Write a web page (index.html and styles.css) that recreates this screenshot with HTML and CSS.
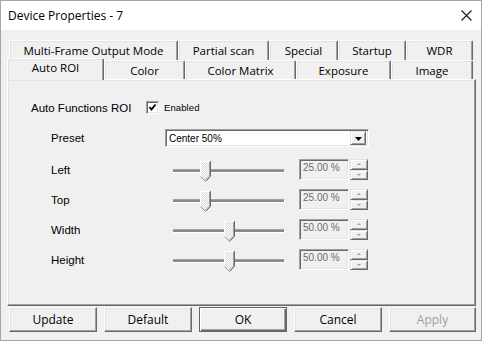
FILE: index.html
```html
<!DOCTYPE html>
<html>
<head>
<meta charset="utf-8">
<link rel="stylesheet" href="styles.css">
</head>
<body>
<div class="window">
  <div class="titlebar">
    <span class="title">Device Properties - 7</span>
    <svg class="close" width="11" height="11" viewBox="0 0 11 11"><path d="M0.5 0.5 L10.5 10.5 M10.5 0.5 L0.5 10.5" stroke="#1a1a1a" stroke-width="1.1" fill="none"/></svg>
  </div>
  <div class="tabs">
    <div class="tabrow back">
      <div class="tab">Multi-Frame Output Mode</div>
      <div class="tab">Partial scan</div>
      <div class="tab">Special</div>
      <div class="tab">Startup</div>
      <div class="tab">WDR</div>
    </div>
    <div class="tabrow front">
      <div class="tab sel">Auto ROI</div>
      <div class="tab">Color</div>
      <div class="tab">Color Matrix</div>
      <div class="tab">Exposure</div>
      <div class="tab">Image</div>
    </div>
  </div>
  <div class="panel">
    <div class="row-main">
      <span class="lbl-main">Auto Functions ROI</span>
      <span class="check"><svg width="9" height="9" viewBox="0 0 9 9"><path d="M1.5 4 L3.5 6.5 L7.5 1.5" stroke="#000" stroke-width="1.8" fill="none"/></svg></span>
      <span class="check-lbl">Enabled</span>
    </div>
    <div class="row preset">
      <span class="lbl">Preset</span>
      <div class="combo">
        <span class="combo-text">Center 50%</span>
        <span class="combo-btn"><svg width="7" height="4" viewBox="0 0 7 4"><path d="M0 0 H7 L3.5 4 Z" fill="#000"/></svg></span>
      </div>
    </div>
    <div class="row">
      <span class="lbl">Left</span>
      <div class="slider"><div class="track"></div><svg class="thumb" style="left:35px" width="11" height="21" viewBox="0 0 11 21"><path d="M0.5 0.5 H10.5 V15.5 L5.5 20.5 L0.5 15.5 Z" fill="url(#dith)"/><path d="M0.5 15.5 V0.5 H10" stroke="#fff" fill="none"/><path d="M10.5 0 V15.5 L5.5 20.5" stroke="#696969" fill="none"/><path d="M0.5 15.5 L5 20" stroke="#a0a0a0" fill="none"/><path d="M9.5 1 V15 L5.5 19" stroke="#a0a0a0" fill="none"/></svg></div>
      <div class="edit">25.00 %</div>
      <div class="spin"><span class="spin-up"><i class="up"></i></span><span class="spin-dn"><i class="dn"></i></span></div>
    </div>
    <div class="row">
      <span class="lbl">Top</span>
      <div class="slider"><div class="track"></div><svg class="thumb" style="left:35px" width="11" height="21" viewBox="0 0 11 21"><path d="M0.5 0.5 H10.5 V15.5 L5.5 20.5 L0.5 15.5 Z" fill="url(#dith)"/><path d="M0.5 15.5 V0.5 H10" stroke="#fff" fill="none"/><path d="M10.5 0 V15.5 L5.5 20.5" stroke="#696969" fill="none"/><path d="M0.5 15.5 L5 20" stroke="#a0a0a0" fill="none"/><path d="M9.5 1 V15 L5.5 19" stroke="#a0a0a0" fill="none"/></svg></div>
      <div class="edit">25.00 %</div>
      <div class="spin"><span class="spin-up"><i class="up"></i></span><span class="spin-dn"><i class="dn"></i></span></div>
    </div>
    <div class="row">
      <span class="lbl">Width</span>
      <div class="slider"><div class="track"></div><svg class="thumb" style="left:59px" width="11" height="21" viewBox="0 0 11 21"><path d="M0.5 0.5 H10.5 V15.5 L5.5 20.5 L0.5 15.5 Z" fill="url(#dith)"/><path d="M0.5 15.5 V0.5 H10" stroke="#fff" fill="none"/><path d="M10.5 0 V15.5 L5.5 20.5" stroke="#696969" fill="none"/><path d="M0.5 15.5 L5 20" stroke="#a0a0a0" fill="none"/><path d="M9.5 1 V15 L5.5 19" stroke="#a0a0a0" fill="none"/></svg></div>
      <div class="edit">50.00 %</div>
      <div class="spin"><span class="spin-up"><i class="up"></i></span><span class="spin-dn"><i class="dn"></i></span></div>
    </div>
    <div class="row">
      <span class="lbl">Height</span>
      <div class="slider"><div class="track"></div><svg class="thumb" style="left:59px" width="11" height="21" viewBox="0 0 11 21"><path d="M0.5 0.5 H10.5 V15.5 L5.5 20.5 L0.5 15.5 Z" fill="url(#dith)"/><path d="M0.5 15.5 V0.5 H10" stroke="#fff" fill="none"/><path d="M10.5 0 V15.5 L5.5 20.5" stroke="#696969" fill="none"/><path d="M0.5 15.5 L5 20" stroke="#a0a0a0" fill="none"/><path d="M9.5 1 V15 L5.5 19" stroke="#a0a0a0" fill="none"/></svg></div>
      <div class="edit">50.00 %</div>
      <div class="spin"><span class="spin-up"><i class="up"></i></span><span class="spin-dn"><i class="dn"></i></span></div>
    </div>
  </div>
  <div class="buttons">
    <div class="btn">Update</div>
    <div class="btn">Default</div>
    <div class="btn default">OK</div>
    <div class="btn">Cancel</div>
    <div class="btn disabled">Apply</div>
  </div>
</div>
<svg class="defs" width="0" height="0"><defs><pattern id="dith" width="2" height="2" patternUnits="userSpaceOnUse"><rect width="2" height="2" fill="#f6f6f6"/><rect width="1" height="1" fill="#e0e0e0"/><rect x="1" y="1" width="1" height="1" fill="#e0e0e0"/></pattern></defs></svg>
</body>
</html>
```
FILE: styles.css
```css
html, body {
  margin: 0;
  padding: 0;
  background: #f0f0f0;
}
.defs {
  position: absolute;
}
.window {
  width: 482px;
  height: 341px;
  box-sizing: border-box;
  border: 1px solid #a6a6a6;
  background: #f0f0f0;
  display: flex;
  flex-direction: column;
  font-family: "Open Sans", "Noto Sans", sans-serif;
  font-size: 11.5px;
  color: #000;
}
.titlebar {
  height: 29px;
  flex: none;
  background: #fff;
  display: flex;
  align-items: center;
  justify-content: space-between;
  padding: 0 9px 0 7px;
  font-size: 12px;
}
.close {
  display: block;
}
.tabs {
  margin-top: 10px;
}
.tabrow {
  display: grid;
  height: 20px;
}
.tabrow.back {
  grid-template-columns: 169px 91px 69px 68px 67px;
  margin-left: 8px;
}
.tabrow.front {
  grid-template-columns: 97px 81px 111px 95px 82px;
  margin-left: 6px;
  height: 19px;
}
.tab {
  box-sizing: border-box;
  height: 20px;
  background: #f0f0f0;
  border-top: 1px solid #fff;
  border-left: 1px solid #fff;
  border-right: 1px solid #696969;
  box-shadow: inset -1px 0 #a0a0a0, inset 1px 1px #e3e3e3;
  border-top-left-radius: 2px;
  border-top-right-radius: 2px;
  display: flex;
  align-items: center;
  justify-content: center;
  line-height: 1;
  padding-top: 1px;
}
.tab.sel {
  height: 22px;
  margin-top: -2px;
  position: relative;
  z-index: 1;
  padding-top: 0;
  padding-bottom: 4px;
}
.panel {
  margin-left: 6px;
  width: 469px;
  height: 227px;
  box-sizing: border-box;
  border-top: 1px solid #fff;
  border-left: 1px solid #fff;
  border-right: 1px solid #696969;
  border-bottom: 1px solid #696969;
  box-shadow: inset -1px -1px #a0a0a0, inset 1px 1px #e3e3e3;
  padding-top: 13px;
  font-family: "Liberation Sans", Arial, sans-serif;
  font-size: 11.5px;
}
.row-main {
  height: 30px;
  display: flex;
  align-items: center;
  padding-left: 23px;
}
.lbl-main {
  width: 115px;
}
.check {
  width: 13px;
  height: 13px;
  box-sizing: border-box;
  background: #fff;
  border: 1px solid;
  border-color: #a0a0a0 #fff #fff #a0a0a0;
  box-shadow: inset 1px 1px #696969, inset -1px -1px #e3e3e3;
  display: flex;
  align-items: center;
  justify-content: center;
  margin-top: -1px;
}
.check svg {
  display: block;
}
.check-lbl {
  margin-left: 5px;
  font-size: 9.5px;
  margin-top: -2px;
  letter-spacing: 0.1px;
}
.row {
  height: 30px;
  display: flex;
  align-items: center;
  padding-left: 43px;
}
.row.preset {
  margin-bottom: 2px;
}
.lbl {
  width: 114px;
  flex: none;
}
.combo {
  width: 204px;
  height: 18px;
  box-sizing: border-box;
  background: #fff;
  border: 1px solid;
  border-color: #a0a0a0 #fff #fff #a0a0a0;
  box-shadow: inset 1px 1px #696969, inset -1px -1px #e3e3e3;
  display: flex;
  align-items: center;
  justify-content: space-between;
  padding: 1px 2px 1px 2px;
  font-size: 10px;
}
.combo-text {
  padding-left: 1px;
}
.combo-btn {
  width: 16px;
  height: 14px;
  box-sizing: border-box;
  background: #f0f0f0;
  border: 1px solid;
  border-color: #e3e3e3 #696969 #696969 #e3e3e3;
  box-shadow: inset 1px 1px #fff, inset -1px -1px #a0a0a0;
  display: flex;
  align-items: center;
  justify-content: center;
}
.combo-btn svg {
  display: block;
  margin-top: 1px;
}
.slider {
  width: 134px;
  height: 30px;
  position: relative;
  flex: none;
}
.track {
  position: absolute;
  left: 8px;
  top: 14px;
  width: 111px;
  height: 2px;
  background: #8a8a8a;
  border-top: 1px solid #a0a0a0;
  border-bottom: 1px solid #fff;
  border-right: 1px solid #fff;
}
.thumb {
  position: absolute;
  top: 6px;
  display: block;
}
.edit {
  width: 50px;
  height: 21px;
  box-sizing: border-box;
  background: #f0f0f0;
  border: 1px solid;
  border-color: #a0a0a0 #fff #fff #a0a0a0;
  box-shadow: inset 1px 1px #696969, inset -1px -1px #e3e3e3;
  font-size: 10px;
  color: #6d6d6d;
  padding: 2px 0 0 3px;
  line-height: 11px;
  margin-top: -1px;
}
.spin {
  width: 18px;
  height: 21px;
  margin-left: 1px;
  display: flex;
  flex-direction: column;
  margin-top: -1px;
}
.spin-up, .spin-dn {
  box-sizing: border-box;
  flex: 1;
  background: #f0f0f0;
  border: 1px solid;
  border-color: #e3e3e3 #696969 #696969 #e3e3e3;
  box-shadow: inset 1px 1px #fff, inset -1px -1px #a0a0a0;
  display: flex;
  align-items: center;
  justify-content: center;
}
.up {
  width: 0;
  height: 0;
  border-left: 2px solid transparent;
  border-right: 2px solid transparent;
  border-bottom: 2px solid #a0a0a0;
}
.dn {
  width: 0;
  height: 0;
  border-left: 2px solid transparent;
  border-right: 2px solid transparent;
  border-top: 2px solid #a0a0a0;
}
.buttons {
  display: flex;
  gap: 7px;
  margin-top: 1px;
  margin-left: 8px;
}
.btn {
  width: 88px;
  height: 25px;
  box-sizing: border-box;
  background: #f0f0f0;
  border: 1px solid;
  border-color: #fff #696969 #696969 #fff;
  box-shadow: inset -1px -1px #a0a0a0, inset 1px 1px #e3e3e3;
  display: flex;
  align-items: center;
  justify-content: center;
  font-size: 12px;
}
.btn.default {
  border: 1px solid #646464;
  box-shadow: inset 1px 1px #fff, inset -1px -1px #696969, inset -2px -2px #a0a0a0;
}
.btn.disabled {
  width: 87px;
  color: #a0a0a0;
}
```
